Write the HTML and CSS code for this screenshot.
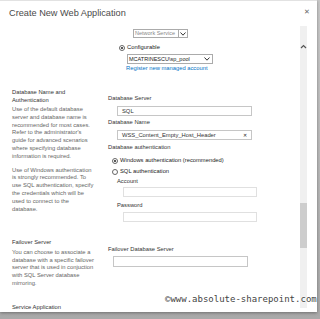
FILE: index.html
```html
<!DOCTYPE html>
<html lang="en">
<head>
  <meta charset="UTF-8" />
  <title>Create New Web Application</title>
  <link rel="stylesheet" href="styles.css">
</head>
<body>

<div class="dialog">
  <div class="dialog-head">
    <div class="dialog-title">Create New Web Application</div>
    <div class="dialog-close">&#x2715;</div>
  </div>

  <div class="dialog-body">
    <div class="content">

      <div class="section section-pool">
        <div class="left"></div>
        <div class="right">
          <div class="select select-small">
            <span class="select-text">Network Service</span>
            <span class="select-btn"><svg width="6" height="4" viewBox="0 0 6 4"><path d="M0.5 0.5 L3 3.2 L5.5 0.5" fill="none" stroke="#333" stroke-width="1"/></svg></span>
          </div>
          <div class="radio-row radio-config">
            <span class="radio checked"></span><span>Configurable</span>
          </div>
          <div class="select select-pool">
            <span class="select-text">MCATRINESCU\sp_pool</span>
            <span class="select-btn"><svg width="6" height="4" viewBox="0 0 6 4"><path d="M0.5 0.5 L3 3.2 L5.5 0.5" fill="none" stroke="#333" stroke-width="1"/></svg></span>
          </div>
          <a class="link" href="#">Register new managed account</a>
        </div>
      </div>

      <div class="section section-db">
        <div class="left">
          <div class="sec-title">Database Name and Authentication</div>
          <p class="desc">Use of the default database server and database name is recommended for most cases. Refer to the administrator's guide for advanced scenarios where specifying database information is required.</p>
          <p class="desc desc-next">Use of Windows authentication is strongly recommended. To use SQL authentication, specify the credentials which will be used to connect to the database.</p>
        </div>
        <div class="right">
          <div class="label">Database Server</div>
          <div class="input input-db">SQL</div>
          <div class="label">Database Name</div>
          <div class="input input-db input-name">WSS_Content_Empty_Host_Header<span class="clear">&#x2715;</span></div>
          <div class="label label-auth">Database authentication</div>
          <div class="radio-row radio-auth">
            <span class="radio checked"></span><span>Windows authentication (recommended)</span>
          </div>
          <div class="radio-row radio-auth">
            <span class="radio"></span><span>SQL authentication</span>
          </div>
          <div class="label sub-label">Account</div>
          <div class="input input-cred"></div>
          <div class="label sub-label sub-label-pass">Password</div>
          <div class="input input-cred"></div>
        </div>
      </div>

      <div class="section section-failover">
        <div class="left">
          <div class="sec-title">Failover Server</div>
          <p class="desc">You can choose to associate a database with a specific failover server that is used in conjuction with SQL Server database mirroring.</p>
        </div>
        <div class="right">
          <div class="label">Failover Database Server</div>
          <div class="input input-failover"></div>
        </div>
      </div>

      <div class="section">
        <div class="left">
          <div class="sec-title">Service Application</div>
        </div>
      </div>

    </div>

    <div class="scrollbar">
      <div class="scroll-up"><svg width="7" height="5" viewBox="0 0 7 5"><path d="M1 4 L3.5 1.5 L6 4" fill="none" stroke="#555" stroke-width="1.2"/></svg></div>
      <div class="scroll-thumb"></div>
    </div>
  </div>

  <div class="watermark">&copy;www.absolute-sharepoint.com</div>
</div>

</body>
</html>
```

FILE: styles.css
```css
body {
  margin: 0;
  width: 320px;
  height: 319px;
  overflow: hidden;
  background: linear-gradient(#c9c9c9, #a9a9a9);
  font-family: "Liberation Sans", Arial, sans-serif;
}
.dialog {
  position: relative;
  width: 317px;
  height: 312px;
  background: #fff;
  border-top: 1px solid #e2e2e2;
  box-sizing: border-box;
  box-shadow: 0 1px 3px rgba(0, 0, 0, 0.35);
  display: flex;
  flex-direction: column;
  overflow: hidden;
}
.dialog-head {
  height: 24px;
  flex: none;
  display: flex;
  align-items: flex-start;
  justify-content: space-between;
}
.dialog-title {
  margin: 7px 0 0 9px;
  font-size: 9.2px;
  color: #4a4a4a;
  line-height: 11px;
}
.dialog-close {
  margin: 6px 7px 0 0;
  font-size: 7px;
  line-height: 9px;
  color: #666;
}
.dialog-body {
  flex: 1;
  display: flex;
  min-height: 0;
}
.content {
  flex: 1;
  overflow: hidden;
  font-size: 5.8px;
  line-height: 7.8px;
  color: #333;
}
.scrollbar {
  flex: none;
  width: 7px;
  margin: 1px 10px 4px 0;
  background: #f0f0f0;
  display: flex;
  flex-direction: column;
  align-items: center;
}
.scroll-up {
  margin-top: 9px;
  height: 6px;
  flex: none;
}
.scroll-thumb {
  flex: none;
  width: 7px;
  height: 45px;
  margin-top: 162px;
  background: #cdcdcd;
}

/* sections */
.section {
  display: grid;
  grid-template-columns: 108px 1fr;
}
.left {
  padding-left: 12px;
  padding-right: 12px;
}
.section-pool {
  padding-top: 4px;
  height: 64px;
  box-sizing: border-box;
}
.section-db {
  height: 150px;
}
.section-db .right {
  padding-top: 6px;
}
.section-failover {
  height: 65px;
}
.section-failover .right {
  padding-top: 7px;
}
.sec-title {
  color: #333;
  width: 70px;
}
.desc {
  margin: 1.5px 0 0;
  color: #666;
}
.desc-next {
  margin-top: 6px;
}
.section-failover .desc {
  margin-top: 2px;
}

/* controls */
.select {
  display: flex;
  align-items: stretch;
  border: 1px solid #ababab;
  height: 9px;
  box-sizing: border-box;
  background: #fff;
}
.select-text {
  flex: 1;
  padding-left: 1px;
  line-height: 7px;
  font-size: 5.5px;
  white-space: nowrap;
  overflow: hidden;
}
.select-btn {
  width: 8px;
  border-left: 1px solid #ababab;
  display: flex;
  align-items: center;
  justify-content: center;
}
.select-small {
  width: 55px;
  margin-left: 25px;
  color: #888;
}
.select-pool {
  width: 86px;
  margin: 2px 0 0 19px;
  height: 10px;
  color: #222;
}
.select-pool .select-text {
  line-height: 8px;
}
.select-pool .select-btn {
  border-left: none;
  width: 10px;
}
.radio-row {
  display: flex;
  align-items: center;
  gap: 2px;
}
.radio {
  width: 6px;
  height: 6px;
  border: 1px solid #666;
  border-radius: 50%;
  box-sizing: border-box;
  position: relative;
  flex: none;
}
.radio.checked::after {
  content: "";
  position: absolute;
  left: 1px;
  top: 1px;
  width: 2px;
  height: 2px;
  border-radius: 50%;
  background: #222;
}
.radio-config {
  margin: 6px 0 0 11px;
  color: #222;
}
.link {
  display: block;
  margin: 1px 0 0 18px;
  color: #0072c6;
  text-decoration: none;
}
.label {
  color: #333;
}
.input {
  border: 1px solid #c6c6c6;
  height: 10px;
  box-sizing: border-box;
  line-height: 8px;
  padding-left: 4px;
  color: #333;
}
.input-db {
  width: 135px;
  margin: 3px 0 3px 9px;
}
.input-name {
  display: flex;
  justify-content: space-between;
  padding-right: 4px;
}
.clear {
  font-size: 5px;
  color: #222;
}
.label-auth {
  margin-top: 4px;
}
.radio-auth {
  margin: 6px 0 0 4px;
  color: #222;
}
.radio-auth + .radio-auth {
  margin-top: 3px;
}
.sub-label {
  margin: 2px 0 0 9px;
}
.sub-label-pass {
  margin-top: 5px;
}
.input-cred {
  width: 134px;
  margin: 1px 0 0 15px;
  border-color: #e0e0e0;
}
.sub-label-pass + .input-cred {
  margin-top: 2px;
}
.input-failover {
  width: 135px;
  height: 11px;
  margin: 2px 0 0 5px;
}
.watermark {
  position: absolute;
  left: 165px;
  top: 293px;
  font-family: "DejaVu Sans Mono", monospace;
  font-size: 9px;
  line-height: 10px;
  color: #444;
  text-shadow: 0 0 2px #fff, 0 0 2px #fff;
  white-space: nowrap;
}
```
